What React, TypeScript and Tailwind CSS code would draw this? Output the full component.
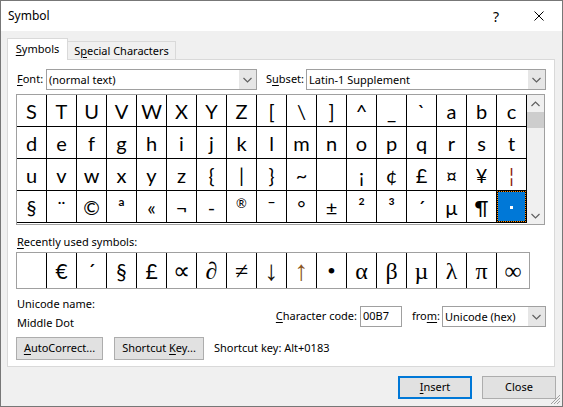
import React from 'react';

const U = ({ children }: { children: React.ReactNode }) => (
  <span className="underline underline-offset-[2px] decoration-[1px]">{children}</span>
);

function Chevron({ up = false }: { up?: boolean }) {
  return (
    <svg width="9" height="6" viewBox="0 0 9 6">
      <path
        d={up ? 'M0.5 5 L4.5 1 L8.5 5' : 'M0.5 1 L4.5 5 L8.5 1'}
        fill="none"
        stroke="#606060"
        strokeWidth="1.2"
      />
    </svg>
  );
}

function SelectBox({ text, className }: { text: string; className: string }) {
  return (
    <div className={`flex h-[21px] border border-[#a0a0a0] bg-white ${className}`}>
      <div className="flex flex-1 items-center pl-[2px] leading-none">{text}</div>
      <div className="flex w-[17px] items-center justify-center bg-[#e6e6e6]">
        <Chevron />
      </div>
    </div>
  );
}

const rows: string[][] = [
  ['S', 'T', 'U', 'V', 'W', 'X', 'Y', 'Z', '[', '\\', ']', '^', '_', '`', 'a', 'b', 'c'],
  ['d', 'e', 'f', 'g', 'h', 'i', 'j', 'k', 'l', 'm', 'n', 'o', 'p', 'q', 'r', 's', 't'],
  ['u', 'v', 'w', 'x', 'y', 'z', '{', '|', '}', '~', '', '¡', '¢', '£', '¤', '¥', '¦'],
  ['§', '¨', '©', 'ª', '«', '¬', '-', '®', '¯', '°', '±', '²', '³', '´', 'µ', '¶', 'SEL'],
];

type Recent = { c: string; serif?: boolean; color?: string; size?: string };
const recents: Recent[] = [
  { c: '' },
  { c: '€' },
  { c: '´' },
  { c: '§' },
  { c: '£' },
  { c: '∝', serif: true },
  { c: '∂', serif: true },
  { c: '≠', serif: true },
  { c: '↓', serif: true, color: 'text-[#1a1208]', size: 'text-[28px]' },
  { c: '↑', serif: true, color: 'text-[#8a5520]', size: 'text-[28px]' },
  { c: '•', serif: true },
  { c: 'α', serif: true },
  { c: 'β', serif: true },
  { c: 'µ', serif: true },
  { c: 'λ', serif: true },
  { c: 'π', serif: true },
  { c: '∞', serif: true },
];

function GridCell({ c }: { c: string }) {
  if (c === 'SEL') {
    return (
      <div className="h-[32px] w-[30px] border-r border-b border-black bg-black">
        <div className="flex h-full w-full items-center justify-center border border-dotted border-[#ff8c00] bg-[#0078d7] bg-clip-padding pt-[2px]">
          <div className="h-[3px] w-[3px] bg-white" />
        </div>
      </div>
    );
  }
  return (
    <div
      className={`flex h-[32px] w-[30px] items-center justify-center border-r border-b border-black font-['Lato',sans-serif] text-[20px] leading-none ${
        c === '¦' ? 'text-[#8b1a10]' : ''
      }`}
    >
      {c === '®' ? <span className="mb-[6px] text-[13px]">®</span> : c}
    </div>
  );
}

export default function App() {
  return (
    <div className="relative flex h-[407px] w-[563px] flex-col border border-[#777777] bg-[#f0f0f0] font-['Noto_Sans',sans-serif] text-[11px] text-black">
      {/* Title bar */}
      <div className="flex h-[30px] shrink-0 items-center bg-white text-[12px]">
        <span className="ml-[7px]">Symbol</span>
        <span className="ml-auto text-[14px]">?</span>
        <svg className="ml-[35px] mr-[18px]" width="10" height="10" viewBox="0 0 10 10">
          <path d="M0.5 0.5 L9.5 9.5 M9.5 0.5 L0.5 9.5" stroke="#000" strokeWidth="1" />
        </svg>
      </div>

      <div className="flex flex-col px-[6px] pt-[7px]">
        {/* Tabs */}
        <div className="flex h-[22px] items-end">
          <div className="relative z-10 flex h-[22px] w-[61px] items-center justify-center border border-b-0 border-[#d9d9d9] bg-white pb-[1px]">
            <span>
              <U>S</U>ymbols
            </span>
          </div>
          <div className="flex h-[19px] w-[108px] items-center justify-center border border-b-0 border-l-0 border-[#d9d9d9] bg-[#f0f0f0]">
            <span>
              S<U>p</U>ecial Characters
            </span>
          </div>
        </div>

        {/* Panel */}
        <div className="-mt-px flex h-[308px] w-[548px] flex-col border border-[#d9d9d9] bg-white px-[8px] pt-[9px]">
          {/* Font row */}
          <div className="flex h-[21px] items-center">
            <span className="ml-[1px] w-[29px]">
              <U>F</U>ont:
            </span>
            <SelectBox text="(normal text)" className="w-[211px]" />
            <span className="ml-[9px] w-[40px]">
              S<U>u</U>bset:
            </span>
            <SelectBox text="Latin-1 Supplement" className="w-[240px]" />
          </div>

          {/* Symbol grid */}
          <div className="mt-[4px] flex w-[529px] border border-[#a0a0a0] bg-white">
            <div className="flex flex-col pb-[1px]">
              {rows.map((r, i) => (
                <div key={i} className="flex">
                  {r.map((c, j) => (
                    <GridCell key={j} c={c} />
                  ))}
                </div>
              ))}
            </div>
            <div className="flex w-[17px] flex-col bg-[#f0f0f0]">
              <div className="flex h-[17px] items-center justify-center">
                <Chevron up />
              </div>
              <div className="h-[16px] bg-[#cdcdcd]" />
              <div className="flex-1" />
              <div className="flex h-[17px] items-center justify-center">
                <Chevron />
              </div>
            </div>
          </div>

          {/* Recently used */}
          <div className="ml-[1px] mt-[9px] leading-[16px]">
            <U>R</U>ecently used symbols:
          </div>
          <div className="mt-[2px] flex h-[37px] w-[514px] border border-[#a0a0a0]">
            {recents.map((r, i) => (
              <div
                key={i}
                className={`flex h-full items-center justify-center leading-none ${
                  i === recents.length - 1 ? 'flex-1' : 'w-[30px] border-r border-black'
                } ${r.serif ? "font-['Liberation_Serif',serif]" : "font-['Lato',sans-serif]"} ${
                  r.size ?? (r.serif ? 'text-[24px]' : 'text-[21px]')
                } ${r.color ?? ''}`}
              >
                {r.c}
              </div>
            ))}
          </div>

          {/* Info */}
          <div className="mt-[7px] flex">
            <div className="ml-[1px] flex flex-col leading-[16px]">
              <span>Unicode name:</span>
              <span className="mt-[3px]">Middle Dot</span>
            </div>
            <div className="ml-auto mt-[10px] flex h-[21px] items-center self-start">
              <span>
                <U>C</U>haracter code:
              </span>
              <div className="ml-[3px] flex h-[21px] w-[42px] items-center border border-[#a0a0a0] pl-[2px]">
                00B7
              </div>
              <span className="ml-[10px] w-[30px]">
                fro<U>m</U>:
              </span>
              <SelectBox text="Unicode (hex)" className="w-[104px]" />
            </div>
          </div>

          {/* Buttons */}
          <div className="mt-[6px] flex items-center">
            <div className="flex h-[23px] w-[87px] items-center justify-center border border-[#adadad] bg-[#e1e1e1]">
              <span>
                <U>A</U>utoCorrect...
              </span>
            </div>
            <div className="ml-[11px] flex h-[23px] w-[90px] items-center justify-center border border-[#adadad] bg-[#e1e1e1]">
              <span>
                Shortcut <U>K</U>ey...
              </span>
            </div>
            <span className="ml-[10px]">Shortcut key: Alt+0183</span>
          </div>
        </div>

        {/* Bottom buttons */}
        <div className="mt-[9px] flex justify-end gap-[10px]">
          <div className="flex h-[23px] w-[74px] items-center justify-center border-2 border-[#0078d7] bg-[#e1e1e1]">
            <span>
              <U>I</U>nsert
            </span>
          </div>
          <div className="flex h-[23px] w-[74px] items-center justify-center border border-[#adadad] bg-[#e1e1e1]">
            Close
          </div>
        </div>
      </div>

      {/* Resize grip */}
      <svg className="absolute bottom-[1px] right-[1px]" width="10" height="10" viewBox="0 0 10 10">
        <path d="M9 3 L3 9 M9 6 L6 9 M9 0 L0 9" stroke="#a0a0a0" strokeWidth="1" />
      </svg>
    </div>
  );
}
